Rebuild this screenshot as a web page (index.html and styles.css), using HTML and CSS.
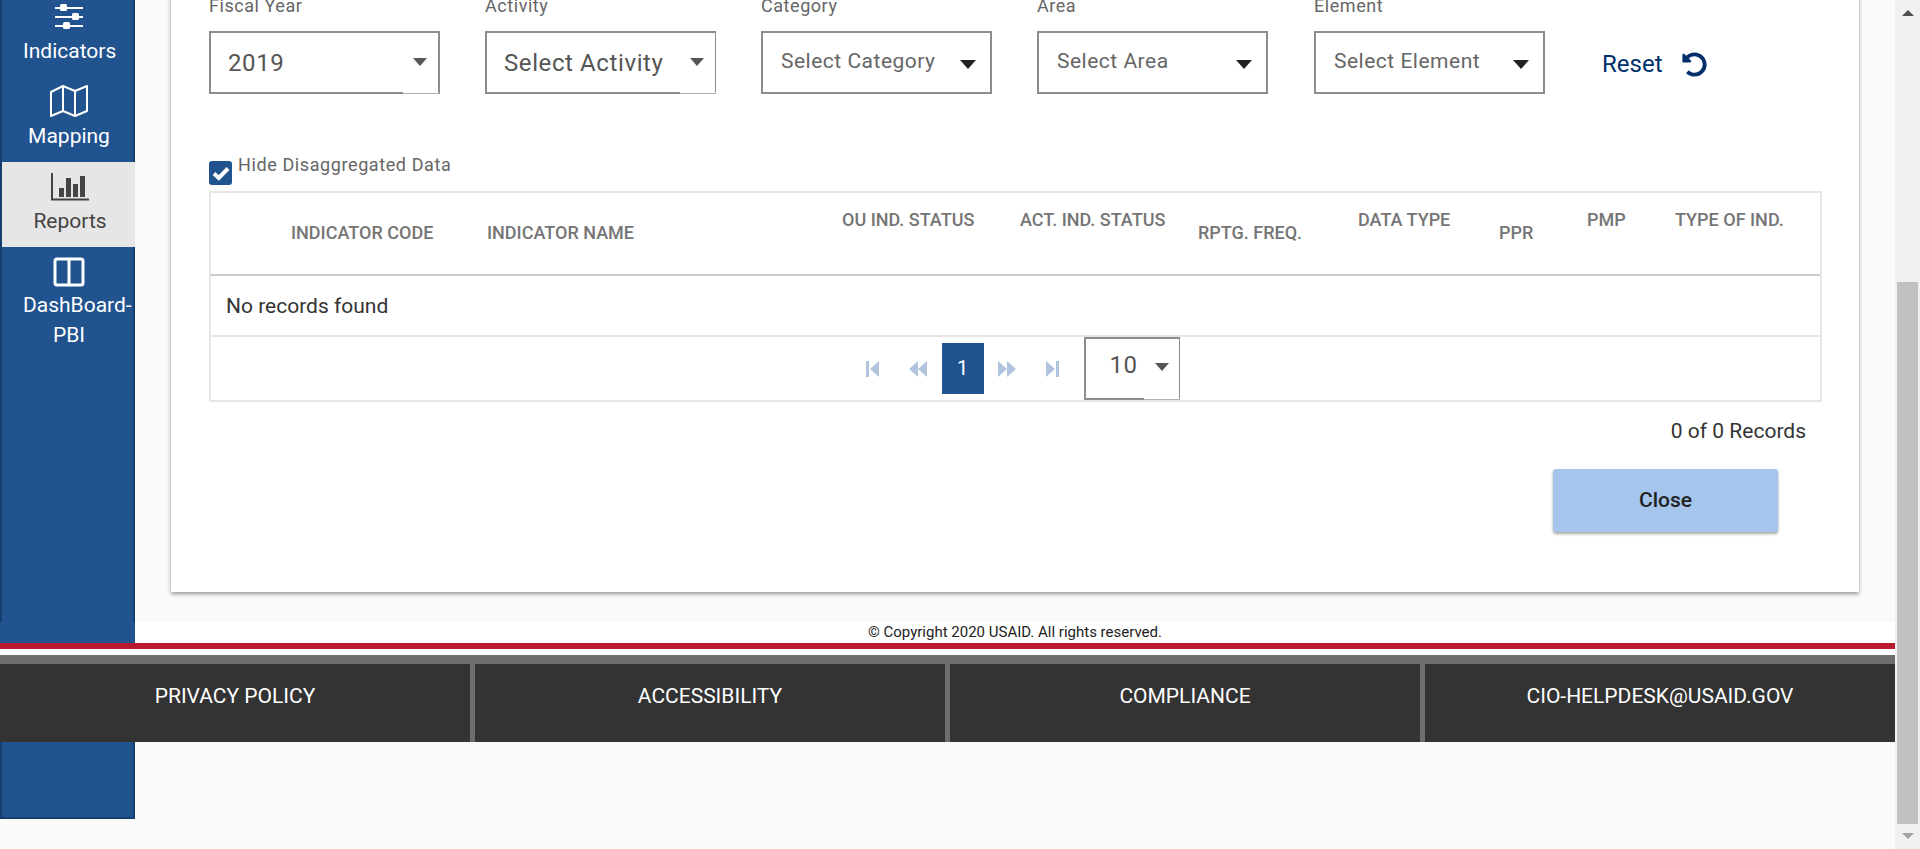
FILE: index.html
```html
<!DOCTYPE html>
<html lang="en">
<head>
    <meta charset="UTF-8">
    <title>Indicators Report</title>
    <link rel="stylesheet" href="styles.css">
</head>
<body>
<div class="app">
    <div class="viewport">
        <nav class="sidebar">
            <a class="nav-item">
                <svg class="nav-icon" width="40" height="28" viewBox="0 0 40 28">
                    <path d="M6 4h28M6 13h28M6 22h28" stroke="#fff" stroke-width="2" fill="none"/>
                    <rect x="11" y="0" width="7" height="7" rx="1.5" fill="#fff"/>
                    <rect x="23" y="9" width="7" height="7" rx="1.5" fill="#fff"/>
                    <rect x="14" y="18" width="7" height="7" rx="1.5" fill="#fff"/>
                </svg>
                <span>Indicators</span>
            </a>
            <a class="nav-item">
                <svg class="nav-icon nav-icon-map" width="40" height="34" viewBox="0 0 40 34">
                    <path d="M2 8 14 2l12 5 12-5v25l-12 5-12-5-12 5zM14 2v25M26 7v25" stroke="#fff" stroke-width="2" fill="none" stroke-linejoin="round"/>
                </svg>
                <span>Mapping</span>
            </a>
            <a class="nav-item active">
                <svg class="nav-icon" width="40" height="28" viewBox="0 0 40 28">
                    <path d="M2 0v26.500h37" stroke="#444" stroke-width="2" fill="none"/>
                    <rect x="9" y="15" width="5" height="9" fill="#444"/>
                    <rect x="16" y="5" width="5" height="19" fill="#444"/>
                    <rect x="23" y="11" width="5" height="13" fill="#444"/>
                    <rect x="30" y="3" width="5" height="21" fill="#444"/>
                </svg>
                <span>Reports</span>
            </a>
            <a class="nav-item">
                <svg class="nav-icon nav-icon-split" width="40" height="30" viewBox="0 0 40 30">
                    <rect x="6" y="2" width="28" height="26" rx="2" stroke="#fff" stroke-width="3" fill="none"/>
                    <path d="M20 2v26" stroke="#fff" stroke-width="3"/>
                </svg>
                <span>DashBoard-<br>PBI</span>
            </a>
        </nav>

        <main class="content">
            <section class="card">
                <div class="filters">
                    <div class="filter">
                        <label>Fiscal Year</label>
                        <div class="select select-md"><span>2019</span><i class="caret"></i></div>
                    </div>
                    <div class="filter">
                        <label>Activity</label>
                        <div class="select select-md select-thin"><span>Select Activity</span><i class="caret"></i></div>
                    </div>
                    <div class="filter">
                        <label>Category</label>
                        <div class="select"><span>Select Category</span><i class="caret"></i></div>
                    </div>
                    <div class="filter">
                        <label>Area</label>
                        <div class="select"><span>Select Area</span><i class="caret"></i></div>
                    </div>
                    <div class="filter filter-last">
                        <label>Element</label>
                        <div class="select"><span>Select Element</span><i class="caret"></i></div>
                    </div>
                    <a class="reset">
                        <span>Reset</span>
                        <svg width="25" height="25" viewBox="0 0 512 512"><path fill="#002f6c" d="M255.545 8c-66.269.119-126.438 26.233-170.86 68.685L48.971 40.971C33.851 25.851 8 36.559 8 57.941V192c0 13.255 10.745 24 24 24h134.059c21.382 0 32.09-25.851 16.971-40.971l-41.75-41.75c30.864-28.899 70.801-44.907 113.23-45.273 92.398-.798 170.283 73.977 169.484 169.442C423.236 348.009 349.816 424 256 424c-41.127 0-79.997-14.678-110.63-41.556-4.743-4.161-11.906-3.908-16.368.553L89.34 422.659c-4.872 4.872-4.631 12.815.482 17.433C133.798 479.813 192.074 504 256 504c136.966 0 247.999-111.033 248-247.998C504.001 119.193 392.354 7.755 255.545 8z"/></svg>
                    </a>
                </div>

                <div class="hide-row">
                    <span class="checkbox">
                        <svg width="18" height="15" viewBox="0 0 18 15"><path d="M2 7.500 6.800 12 16 2.500" stroke="#fff" stroke-width="4" fill="none"/></svg>
                    </span>
                    <label>Hide Disaggregated Data</label>
                </div>

                <div class="table-box">
                    <table class="grid">
                        <thead>
                            <tr>
                                <th class="col-a"></th>
                                <th class="col-b">INDICATOR CODE</th>
                                <th class="col-c">INDICATOR NAME</th>
                                <th class="col-d high">OU IND. STATUS</th>
                                <th class="col-e high">ACT. IND. STATUS</th>
                                <th class="col-f">RPTG. FREQ.</th>
                                <th class="col-g high">DATA TYPE</th>
                                <th class="col-h">PPR</th>
                                <th class="col-i high">PMP</th>
                                <th class="high">TYPE OF IND.</th>
                            </tr>
                        </thead>
                        <tbody>
                            <tr><td colspan="10">No records found</td></tr>
                        </tbody>
                    </table>
                    <div class="pager">
                        <button class="page-btn">
                            <svg width="13" height="16" viewBox="0 0 13 16"><path d="M0 0h3v16H0zM13 0v16L4 8z"/></svg>
                        </button>
                        <button class="page-btn">
                            <svg width="19" height="16" viewBox="0 0 19 16"><path d="M10 0v16L1 8zM19 0v16l-9-8z"/></svg>
                        </button>
                        <span class="page-current">1</span>
                        <button class="page-btn">
                            <svg width="19" height="16" viewBox="0 0 19 16"><path d="M0 0v16l9-8zM9 0v16l9-8z"/></svg>
                        </button>
                        <button class="page-btn">
                            <svg width="13" height="16" viewBox="0 0 13 16"><path d="M0 0v16l9-8zM10 0h3v16h-3z"/></svg>
                        </button>
                        <div class="select select-md select-thin select-page"><span>10</span><i class="caret"></i></div>
                    </div>
                </div>

                <p class="records">0 of 0 Records</p>
                <div class="actions">
                    <button class="btn-close">Close</button>
                </div>
            </section>
        </main>

        <footer class="footer">
            <div class="copyright-row">
                <div class="footer-tab"></div>
                <div class="copyright">© Copyright 2020 USAID. All rights reserved.</div>
            </div>
            <div class="red-line"></div>
            <div class="footer-links">
                <a>PRIVACY POLICY</a>
                <a>ACCESSIBILITY</a>
                <a>COMPLIANCE</a>
                <a>CIO-HELPDESK@USAID.GOV</a>
            </div>
        </footer>
    </div>

    <div class="scrollbar">
        <i class="arrow-up"></i>
        <div class="thumb"></div>
        <i class="arrow-down"></i>
    </div>
</div>
</body>
</html>
```
FILE: styles.css
```css
html, body {
    height: 100%;
    margin: 0;
    padding: 0;
    overflow: hidden;
}
body {
    font-family: Roboto, "Liberation Sans", sans-serif;
    background: #fafafa;
    color: #333;
}
.app {
    display: flex;
    height: 849px;
}
.viewport {
    width: 1895px;
    display: grid;
    grid-template-columns: 135px 1fr;
    grid-template-rows: 622px 120px 1fr;
    overflow: hidden;
}

/* sidebar */
.sidebar {
    grid-column: 1;
    grid-row: 1 / 4;
    margin: -8px 0 30px;
    background: #21538f;
    border-left: 2px solid #153e70;
    border-right: 2px solid #153e70;
    border-bottom: 2px solid #153e70;
}
.nav-item {
    display: flex;
    flex-direction: column;
    align-items: center;
    height: 85px;
    box-sizing: border-box;
    padding-left: 3px;
    color: #fff;
    font-size: 21px;
    line-height: 30px;
    text-align: center;
}
.nav-item span { width: 92px; }
.nav-icon { margin-top: 12px; margin-bottom: 4px; flex: none; }
.nav-icon-map { margin-top: 7px; margin-bottom: 3px; }
.nav-icon-split { margin-top: 10px; margin-bottom: 3px; }
.nav-item.active {
    background: #e6e6e6;
    color: #444;
    margin-right: -2px;
}
.nav-item.active .nav-icon { margin-top: 11px; margin-bottom: 5px; }

/* main card */
.content {
    grid-column: 2;
    grid-row: 1;
    min-width: 0;
}
.card {
    margin: -8px 0 0 36px;
    width: 1688px;
    height: 600px;
    box-sizing: border-box;
    padding-left: 38px;
    background: #fff;
    box-shadow: 0 2px 4px rgba(0, 0, 0, 0.4);
}
.filters {
    display: flex;
    height: 102px;
}
.filter { width: 231px; margin-right: 45px; }
.filter-last { margin-left: 1px; }
.filter label {
    display: block;
    height: 39px;
    font-size: 18px;
    line-height: 28px;
    letter-spacing: 0.55px;
    color: #666;
}
.select {
    position: relative;
    display: flex;
    align-items: center;
    justify-content: space-between;
    height: 63px;
    box-sizing: border-box;
    padding: 0 14px 4px 18px;
    border: 2px solid #8c8c8c;
    font-size: 21px;
    letter-spacing: 0.5px;
    color: #666;
}
.caret {
    margin-top: 8px;
    border-left: 8.500px solid transparent;
    border-right: 8.500px solid transparent;
    border-top: 9px solid #222;
}
.select-md {
    padding: 0 11px 0 17px;
    font-size: 24px;
    letter-spacing: 0.6px;
    color: #555;
}
.select-md .caret {
    margin-top: -2px;
    border-left-width: 7px;
    border-right-width: 7px;
    border-top: 8px solid #555;
}
.select-md::after {
    content: "";
    position: absolute;
    right: -1px;
    bottom: -2px;
    width: 36px;
    height: 2px;
    box-sizing: border-box;
    background: #fff;
    border-bottom: 1px solid #b0b0b0;
    border-radius: 0 0 3px 0;
}
.select-thin { border-right-width: 1px; }
.reset {
    display: flex;
    align-items: center;
    gap: 20px;
    height: 63px;
    margin-top: 40px;
    margin-left: 12px;
    color: #002f6c;
    font-size: 24px;
}
.reset svg { margin-top: 2px; }

.hide-row {
    display: flex;
    height: 30px;
    margin-top: 67px;
}
.checkbox {
    display: flex;
    align-items: center;
    justify-content: center;
    width: 23px;
    height: 24px;
    background: #21538f;
    border-radius: 3px;
}
.hide-row label {
    margin-left: 6px;
    margin-top: -6px;
    font-size: 18px;
    line-height: 20px;
    letter-spacing: 0.6px;
    color: #666;
}

/* table */
.table-box {
    width: 1613px;
    box-sizing: border-box;
    border: 2px solid #e6e6e6;
}
.grid {
    width: 100%;
    table-layout: fixed;
    border-collapse: collapse;
}
.grid th {
    height: 82px;
    padding: 0 0 2px;
    box-sizing: border-box;
    border-bottom: 2px solid #ccc;
    text-align: left;
    font-size: 18px;
    font-weight: 500;
    color: #757575;
}
.grid th.high { padding-bottom: 28px; }
.col-a { width: 80px; }
.col-b { width: 196px; }
.col-c { width: 355px; }
.col-d { width: 178px; }
.col-e { width: 178px; }
.col-f { width: 160px; }
.col-g { width: 141px; }
.col-h { width: 88px; }
.col-i { width: 88px; }
.grid td {
    height: 61px;
    padding: 0 0 0 15px;
    box-sizing: border-box;
    border-bottom: 2px solid #e6e6e6;
    font-size: 21px;
    color: #333;
}
.pager {
    display: flex;
    align-items: center;
    justify-content: center;
    height: 63px;
    padding-right: 2px;
}
.page-btn {
    width: 45px;
    padding: 0;
    background: none;
    border: 0;
    display: flex;
    justify-content: center;
    fill: #b0c4dd;
}
.page-current {
    width: 42px;
    height: 51px;
    margin: 0 1px 0 2px;
    background: #21538f;
    color: #fff;
    font-size: 20px;
    line-height: 51px;
    text-align: center;
}
.select-page {
    width: 96px;
    margin-left: 9px;
    padding: 0 10px 7px 24px;
}
.select-page .caret { margin-top: 3px; }

.records {
    margin: 17px 17px 0 0;
    width: 1597px;
    text-align: right;
    font-size: 21px;
    line-height: 24px;
    color: #333;
}
.actions {
    display: flex;
    justify-content: flex-end;
    width: 1569px;
    margin-top: 26px;
}
.btn-close {
    width: 225px;
    height: 63px;
    background: #a5c5ec;
    border: 0;
    border-radius: 3px;
    box-shadow: 0 2px 3px rgba(0, 0, 0, 0.35);
    font-family: inherit;
    font-size: 21px;
    font-weight: 500;
    padding-bottom: 2px;
    color: #222;
}

/* footer */
.footer {
    grid-column: 1 / 3;
    grid-row: 2;
    z-index: 1;
    background: #fff;
}
.copyright-row { display: flex; height: 21px; }
.footer-tab { width: 135px; background: #21538f; }
.copyright {
    flex: 1;
    text-align: center;
    font-size: 15px;
    line-height: 21px;
    color: #222;
}
.red-line {
    height: 6px;
    margin-bottom: 6px;
    background: #ba1a2e;
}
.footer-links {
    display: grid;
    grid-template-columns: repeat(4, 470px);
    column-gap: 5px;
    padding-top: 9px;
    background: #6e6e6e;
}
.footer-links a {
    height: 78px;
    box-sizing: border-box;
    padding-top: 20px;
    background: #333;
    color: #fff;
    font-size: 21px;
    line-height: 24px;
    text-align: center;
}

/* scrollbar */
.scrollbar {
    width: 25px;
    height: 849px;
    background: #f1f1f1;
    display: flex;
    flex-direction: column;
    align-items: center;
}
.arrow-up {
    margin-top: 10px;
    border-left: 6px solid transparent;
    border-right: 6px solid transparent;
    border-bottom: 6px solid #505050;
}
.thumb {
    width: 21px;
    height: 542px;
    margin-top: 266px;
    background: #c1c1c1;
}
.arrow-down {
    margin-top: 9px;
    border-left: 6px solid transparent;
    border-right: 6px solid transparent;
    border-top: 6px solid #a3a3a3;
}
```
